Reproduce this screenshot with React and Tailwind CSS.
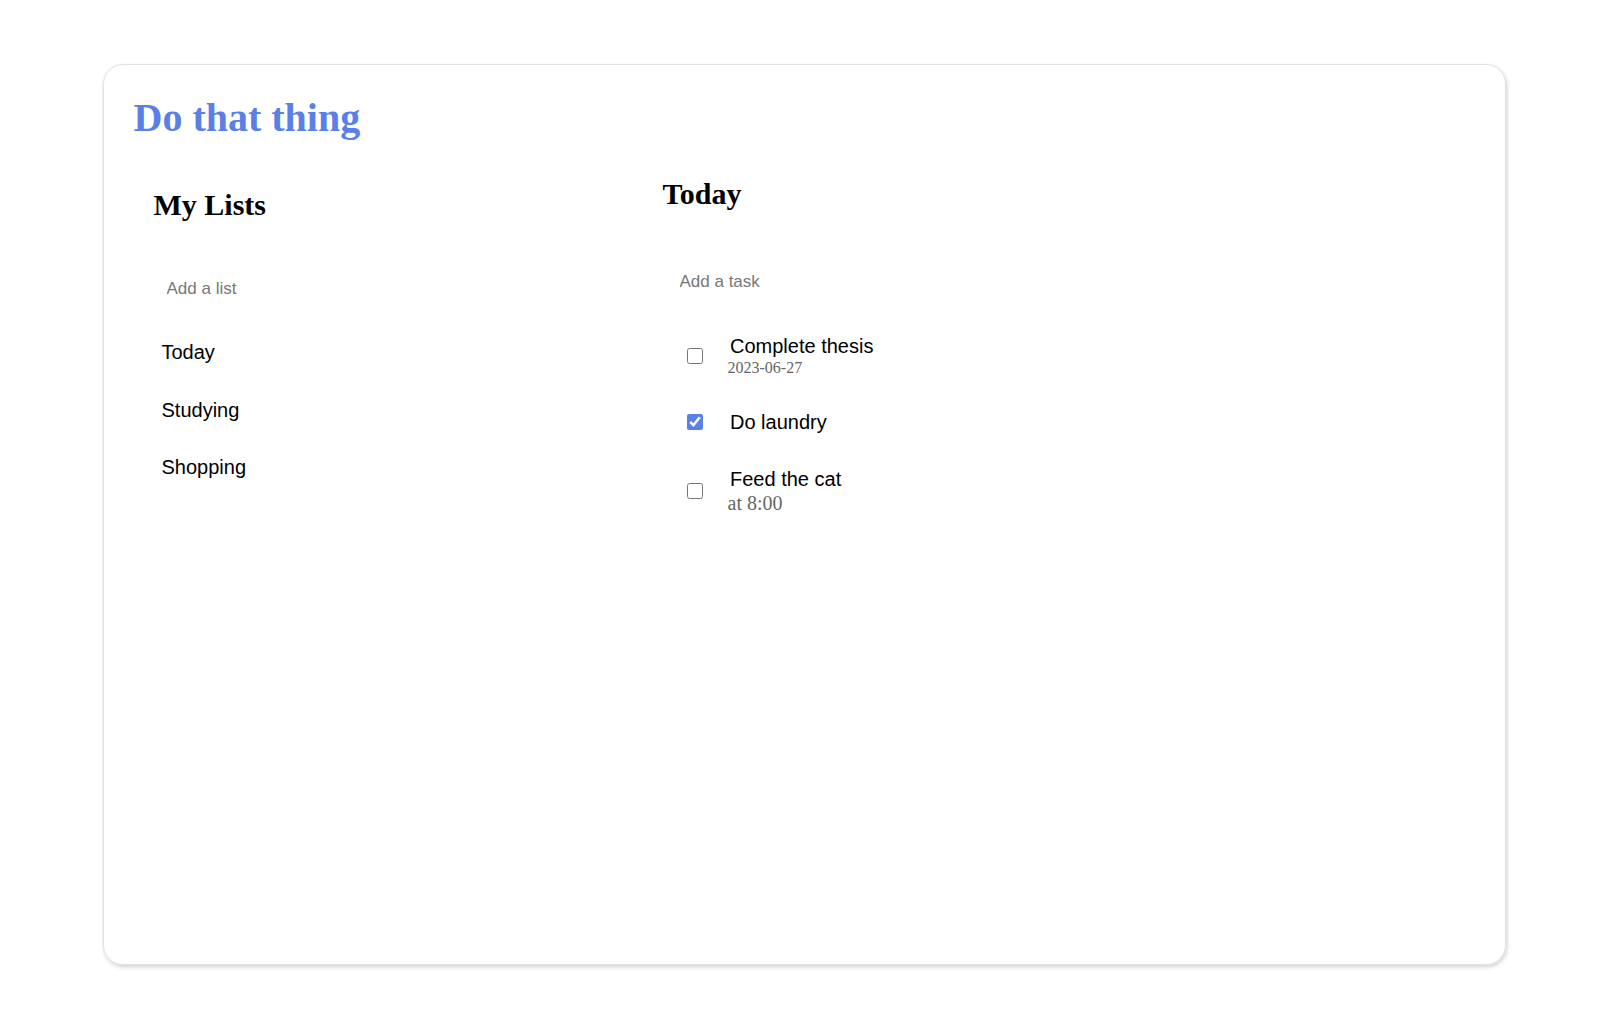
import React, { useState } from 'react';

const lists = ['Today', 'Studying', 'Shopping'];

const initialTasks = [
  { id: 1, title: 'Complete thesis', note: '2023-06-27', noteSize: 'text-[16px]', done: false },
  { id: 2, title: 'Do laundry', note: null, done: true },
  { id: 3, title: 'Feed the cat', note: 'at 8:00', noteSize: 'text-[20px]', done: false },
];

function TaskRow({ task, onToggle }) {
  return (
    <div className="flex items-center gap-[27.5px]">
      <input
        type="checkbox"
        checked={task.done}
        onChange={() => onToggle(task.id)}
        className="w-4 h-4 m-0 accent-[#5a80e8]"
      />
      <div className="flex flex-col gap-[3.5px]">
        <span className="text-[20px] leading-none text-black">{task.title}</span>
        {task.note && (
          <span className={`${task.noteSize} leading-none -ml-[2.5px] text-[#666] font-['Liberation_Serif',serif]`}>
            {task.note}
          </span>
        )}
      </div>
    </div>
  );
}

export default function App() {
  const [tasks, setTasks] = useState(initialTasks);

  function toggle(id) {
    setTasks(tasks.map(t => (t.id === id ? { ...t, done: !t.done } : t)));
  }

  return (
    <div className="min-h-screen bg-white pt-[64px] font-['Liberation_Sans',Arial,sans-serif]">
      <div className="mx-auto w-[1403px] h-[901px] rounded-[20px] border border-[#e2e2e2] shadow-[1px_2px_4px_rgba(0,0,0,0.18)] px-[30px] pt-[33px]">
        <h1 className="text-[40px] leading-none font-bold text-[#5a80e8] font-['Liberation_Serif',serif]">
          Do that thing
        </h1>

        <div className="flex mt-[40.7px]">
          {/* lists column */}
          <div className="w-[529px] pt-[11px] flex flex-col">
            <h2 className="ml-[20px] text-[30px] leading-none font-bold font-['Liberation_Serif',serif]">My Lists</h2>
            <input
              placeholder="Add a list"
              className="ml-[33px] mt-[57.4px] h-6 w-[300px] text-[17px] outline-none placeholder:text-[#777]"
            />
            <div className="ml-[28px] mt-[41.3px] flex flex-col gap-[37.3px]">
              {lists.map(name => (
                <div key={name} className="text-[20px] leading-none text-black">{name}</div>
              ))}
            </div>
          </div>

          {/* tasks column */}
          <div className="flex-1 flex flex-col">
            <h2 className="text-[30px] leading-none font-bold font-['Liberation_Serif',serif]">Today</h2>
            <input
              placeholder="Add a task"
              className="ml-[17px] mt-[60.7px] h-6 w-[300px] text-[17px] outline-none placeholder:text-[#777]"
            />
            <div className="ml-[24px] mt-[43px] flex flex-col gap-[36.6px]">
              {tasks.map(task => (
                <TaskRow key={task.id} task={task} onToggle={toggle} />
              ))}
            </div>
          </div>
        </div>
      </div>
    </div>
  );
}
